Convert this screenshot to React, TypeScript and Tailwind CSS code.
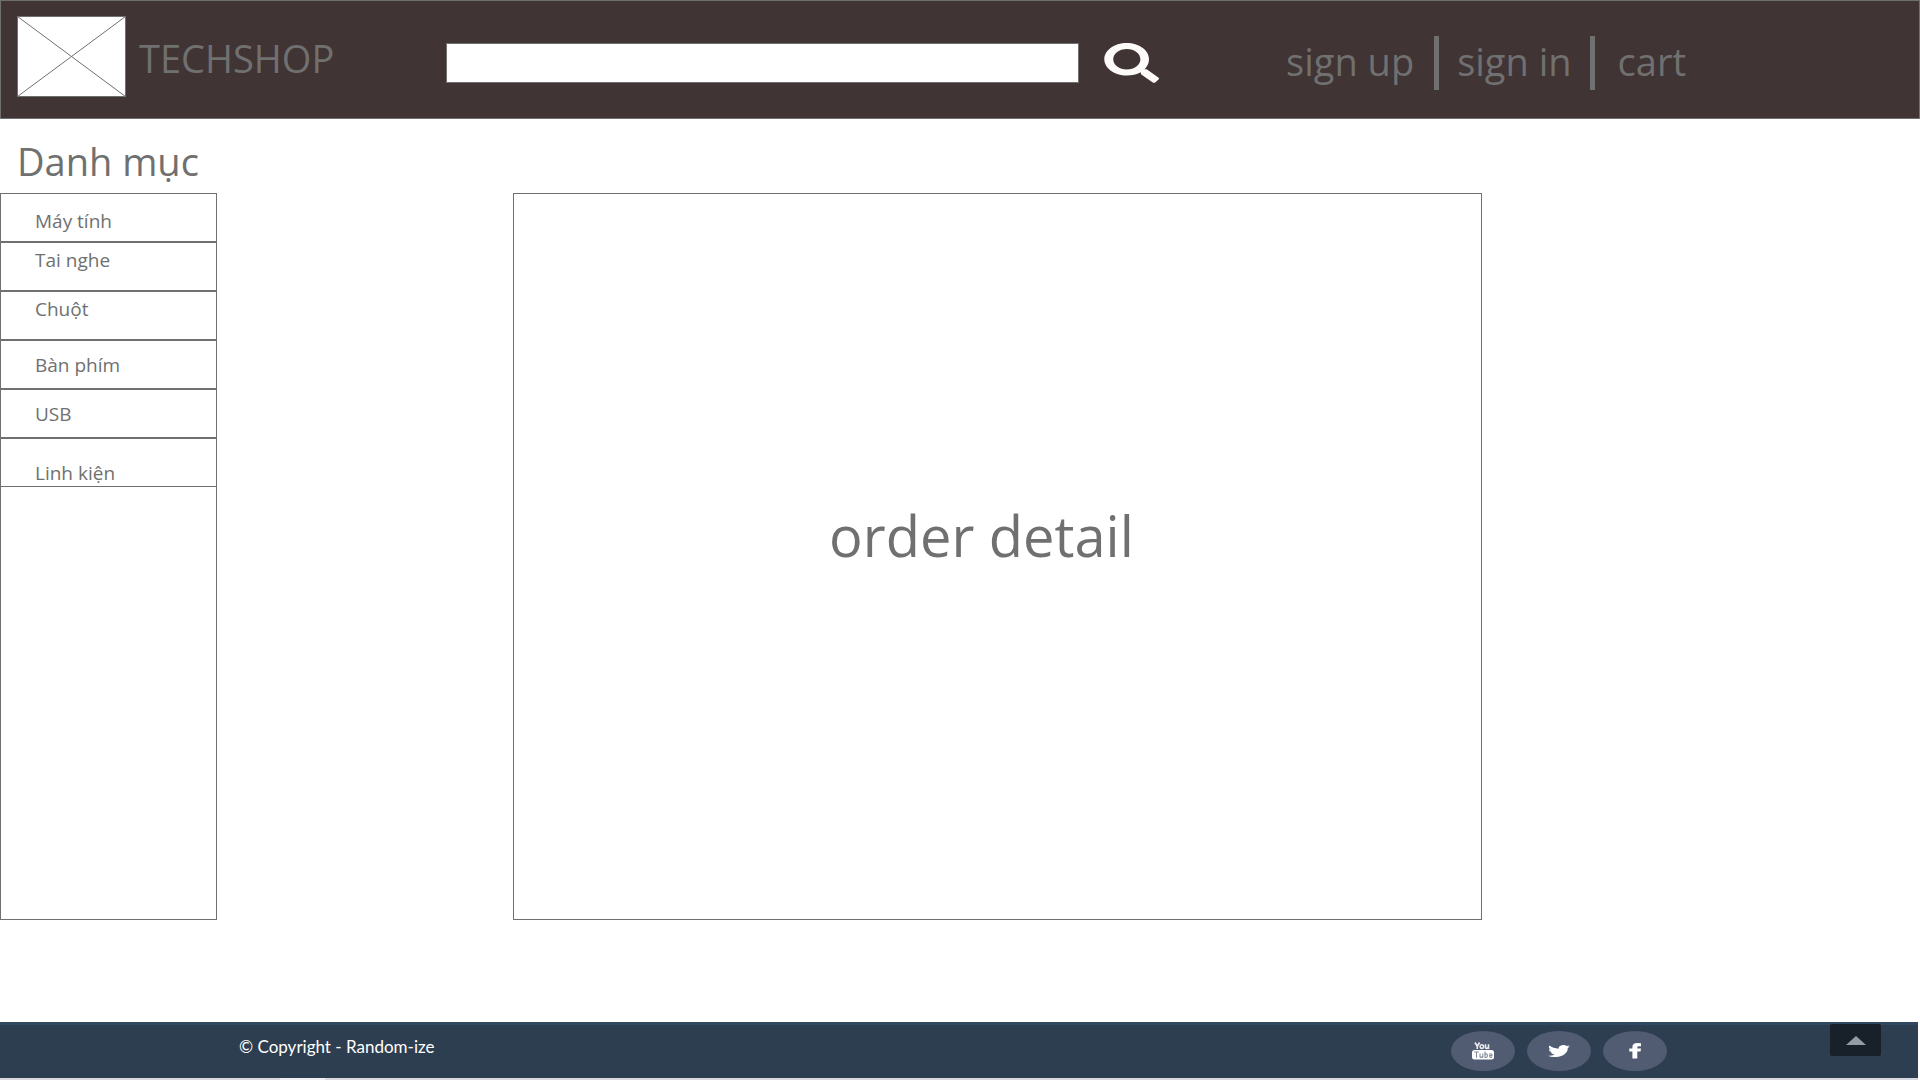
const categories = [
  { name: 'Máy tính', align: 'items-center pt-1.5' },
  { name: 'Tai nghe', align: 'items-start pt-1' },
  { name: 'Chuột', align: 'items-start pt-1' },
  { name: 'Bàn phím', align: 'items-center' },
  { name: 'USB', align: 'items-center' },
  { name: 'Linh kiện', align: 'items-end' },
];

function Logo() {
  return (
    <svg className="h-[82px] w-[110px] shrink-0" viewBox="0 0 110 82" role="img" aria-label="Logo">
      <rect x="0.5" y="0.5" width="108" height="80" fill="#fff" stroke="#707070" />
      <path d="M0.5 0.5 L108.5 80.5 M108.5 0.5 L0.5 80.5" stroke="#707070" strokeWidth="1" fill="none" />
    </svg>
  );
}

function SearchIcon() {
  return (
    <svg className="h-10 w-14" viewBox="0 0 56 40" aria-hidden="true">
      <path
        fillRule="evenodd"
        fill="#fffafa"
        d="M22.7 0C35 0 45 7.200 45 16.200C45 20.400 43.200 23.400 40.700 26.200L42.700 26.300L54.300 34.600Q55.600 35.600 54.500 36.600L51.500 39.300Q50 40.400 48.400 39.300L37 31.200L36.700 29.300C32.500 31.600 28 32.600 22.700 32.600C10.300 32.600 0.300 25.300 0.300 16.300C0.300 7.200 10.300 0 22.700 0ZM22.900 6C15.300 6 9.200 10.600 9.200 16.300C9.200 22 15.300 26.500 22.900 26.500C30.400 26.500 36.400 22 36.400 16.300C36.400 10.600 30.400 6 22.900 6Z"
      />
    </svg>
  );
}

function YouTubeIcon() {
  return (
    <svg className="h-[18px] w-6" viewBox="0 0 24 18" aria-hidden="true">
      <path d="M4 0.500L6.300 4.300V7M8.600 0.500L6.300 4.300" stroke="#e9ebf0" strokeWidth="1.700" fill="none" />
      <ellipse cx="10.900" cy="4.600" rx="1.700" ry="1.900" stroke="#e9ebf0" strokeWidth="1.500" fill="none" />
      <path d="M14.500 2.300V5.500Q14.500 6.500 15.600 6.400Q16.800 6.200 17.300 5.300M17.500 2.300V7" stroke="#e9ebf0" strokeWidth="1.600" fill="none" />
      <rect x="1" y="8" width="22" height="9.500" rx="2.500" fill="#fff" />
      <path
        d="M3.200 10H7.800M5.500 10V15.800M9 11.500V14.500Q9 15.500 10 15.300Q11.300 15 11.500 14.300M11.800 11.500V15.800M14 9.500V15.800M14 12.300Q16.300 11.200 16.300 13V14.200Q16.200 16 14 15.200M21 14.300Q20.800 15.500 19.700 15.400Q18.600 15.300 18.600 13.700Q18.600 11.800 19.800 11.800Q21.100 11.800 21 13.500H18.600"
        stroke="#838b9d"
        strokeWidth="1.100"
        fill="none"
      />
    </svg>
  );
}

function TwitterIcon() {
  return (
    <svg className="h-3 w-[22px]" viewBox="0 0 24 19.5" preserveAspectRatio="none" aria-hidden="true">
      <path
        fill="#fff"
        d="M23.953 2.370a10 10 0 0 1-2.825.775 4.958 4.958 0 0 0 2.163-2.723c-.951.555-2.005.959-3.127 1.184a4.920 4.920 0 0 0-8.384 4.482C7.690 5.895 4.067 3.930 1.640.962a4.822 4.822 0 0 0-.666 2.475c0 1.710.870 3.213 2.188 4.096a4.904 4.904 0 0 1-2.228-.616v.060a4.923 4.923 0 0 0 3.946 4.827 4.996 4.996 0 0 1-2.212.085 4.936 4.936 0 0 0 4.604 3.417 9.867 9.867 0 0 1-6.102 2.105c-.390 0-.779-.023-1.170-.067a13.995 13.995 0 0 0 7.557 2.209c9.053 0 13.998-7.496 13.998-13.985 0-.210 0-.420-.015-.630A9.935 9.935 0 0 0 24 2.390z"
      />
    </svg>
  );
}

function FacebookIcon() {
  return (
    <svg className="h-4 w-3" viewBox="0 0 12 16" aria-hidden="true">
      <path fill="#fff" d="M12 0.200V3.200H9.800Q8.300 3.200 8.300 4.400V5.600H12L11.500 8.500H8.300V15.500H3.400V8.500H0.300V5.600H3.400V4Q3.400 0 8.400 0Z" />
    </svg>
  );
}

const socials = [
  { name: 'YouTube', Icon: YouTubeIcon },
  { name: 'Twitter', Icon: TwitterIcon },
  { name: 'Facebook', Icon: FacebookIcon },
];

export default function App() {
  return (
    <div className="flex min-h-screen flex-col bg-white font-['Open_Sans',sans-serif] text-[#707070]">
      <header className="flex items-start border border-[#707070] bg-[#403434] px-4 pt-[15px] pb-5">
        <Logo />
        <div className="ml-3 pt-3 text-[38px] leading-[60px]">TECHSHOP</div>
        <form className="mt-[27px] ml-28 flex flex-1 items-start gap-[25px]" role="search">
          <input type="search" aria-label="Search" className="h-10 min-w-0 flex-1 border border-[#707070] bg-white px-3 text-xl outline-none" />
          <button type="button" aria-label="Search">
            <SearchIcon />
          </button>
        </form>
        <nav className="mt-5 mr-[217px] ml-[126px] flex items-start text-[38px] leading-[50px]">
          <a href="#signup">sign up</a>
          <span className="mr-[18px] ml-5 h-[54px] w-[5px] bg-[#707070]" />
          <a href="#signin">sign in</a>
          <span className="mr-[23px] ml-[18px] h-[54px] w-[5px] bg-[#707070]" />
          <a href="#cart">cart</a>
        </nav>
      </header>

      <h2 className="pt-3 pb-0.5 pl-[17px] text-[38px] leading-[60px]">Danh mục</h2>

      <main className="flex flex-1 items-stretch pb-[102px]">
        <aside className="w-[217px] shrink-0 border border-[#707070]">
          <ul className="-m-px">
            {categories.map(({ name, align }) => (
              <li key={name} className={`flex h-[49px] border border-[#707070] pl-[34px] text-[19px] leading-[26px] ${align}`}>
                <a href="#category">{name}</a>
              </li>
            ))}
          </ul>
        </aside>
        <section className="mr-[438px] ml-[296px] flex flex-1 items-center justify-center border border-[#707070] pr-8 pb-11">
          <h1 className="text-[56px] leading-[80px]">order detail</h1>
        </section>
      </main>

      <footer className="mr-0.5">
        <div className="flex h-14 items-start border-t-[3px] border-[#2f4860] bg-[#2d3e50] pr-[37px] pl-[239px]">
          <p className="pt-2.5 font-['Lato',sans-serif] text-[17px] leading-6 text-white">© Copyright - Random-ize</p>
          <div className="mt-1.5 ml-auto flex gap-3">
            {socials.map(({ name, Icon }) => (
              <a key={name} href="#social" aria-label={name} className="flex h-10 w-16 items-center justify-center rounded-[50%] bg-[#515b72]">
                <Icon />
              </a>
            ))}
          </div>
          <button type="button" aria-label="Back to top" className="-mt-px ml-[163px] flex h-8 w-[51px] items-center justify-center rounded-xs bg-[#18202a]">
            <svg className="h-[9px] w-5" viewBox="0 0 20 9" aria-hidden="true">
              <path d="M10 0L20 9H0Z" fill="#969ca5" />
            </svg>
          </button>
        </div>
        <div className="h-0.5 bg-[#d8d8de] pl-[280px]">
          <div className="h-full w-[45px] bg-[#f0f0f4]" />
        </div>
      </footer>
    </div>
  );
}
